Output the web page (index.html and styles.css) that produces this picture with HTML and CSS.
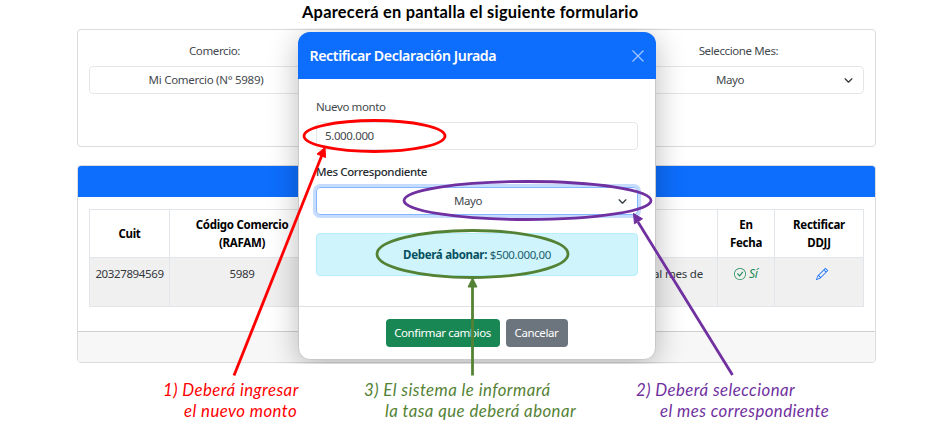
FILE: index.html
```html
<!DOCTYPE html>
<html lang="es">
<head>
<meta charset="utf-8">
<title>Rectificar Declaración Jurada</title>
<link rel="stylesheet" href="styles.css">
</head>
<body>
<h1 class="title">Aparecerá en pantalla el siguiente formulario</h1>
<main class="screen">
  <section class="card filters">
    <div class="filter">
      <label class="filter-label">Comercio:</label>
      <div class="control"><span class="commerce">Mi Comercio (N° 5989)</span></div>
    </div>
    <div class="filter"></div>
    <div class="filter">
      <label class="filter-label month-label">Seleccione Mes:</label>
      <div class="control"><span>Mayo</span>
        <svg class="chevron" viewBox="0 0 16 16"><path d="m2 5 6 6 6-6"/></svg>
      </div>
    </div>
  </section>
  <section class="card results">
    <div class="results-head"></div>
    <div class="results-body">
      <table class="table">
        <colgroup><col class="c-cuit"><col class="c-code"><col><col class="c-date"><col class="c-edit"></colgroup>
        <thead><tr><th>Cuit</th><th><span class="code-head">Código Comercio</span><br>(RAFAM)</th><th></th><th>En<br>Fecha</th><th>Rectificar<br>DDJJ</th></tr></thead>
        <tbody><tr><td>20327894569</td><td>5989</td><td class="detail">al mes de</td>
          <td class="ok"><svg class="icon" viewBox="0 0 16 16"><path d="M8 15A7 7 0 1 1 8 1a7 7 0 0 1 0 14m0 1A8 8 0 1 0 8 0a8 8 0 0 0 0 16"/><path d="m10.97 4.97-.02.022-3.473 4.425-2.093-2.094a.75.75 0 0 0-1.06 1.06L6.97 11.03a.75.75 0 0 0 1.079-.02l3.992-4.99a.75.75 0 0 0-1.071-1.05"/></svg> <i>Sí</i></td>
          <td class="edit"><svg class="icon" viewBox="0 0 16 16"><path d="M12.146.146a.5.5 0 0 1 .708 0l3 3a.5.5 0 0 1 0 .708l-10 10a.5.5 0 0 1-.168.11l-5 2a.5.5 0 0 1-.65-.65l2-5a.5.5 0 0 1 .11-.168zM11.207 2.5 13.5 4.793 14.793 3.5 12.5 1.207zm1.586 3L10.5 3.207 4 9.707V10h.5a.5.5 0 0 1 .5.5v.5h.5a.5.5 0 0 1 .5.5v.5h.293zm-9.761 5.175-.106.106-1.528 3.821 3.821-1.528.106-.106A.5.5 0 0 1 5 12.5V12h-.5a.5.5 0 0 1-.5-.5V11h-.5a.5.5 0 0 1-.468-.325"/></svg></td></tr></tbody>
      </table>
    </div>
    <div class="results-foot"></div>
  </section>
  <div class="modal">
    <header class="modal-head"><h2>Rectificar Declaración Jurada</h2>
      <svg class="close" viewBox="0 0 12 12"><path d="M.5.5l11 11M11.500.5l-11 11"/></svg>
    </header>
    <div class="modal-body">
      <label class="field-label">Nuevo monto</label>
      <div class="input">5.000.000</div>
      <label class="field-label strong">Mes Correspondiente</label>
      <div class="input select"><span>Mayo</span>
        <svg class="chevron" viewBox="0 0 16 16"><path d="m2 5 6 6 6-6"/></svg>
      </div>
      <div class="alert"><b>Deberá abonar:</b> <span>$500.000,00</span></div>
    </div>
    <footer class="modal-foot"><button class="btn confirm">Confirmar cambios</button><button class="btn cancel">Cancelar</button></footer>
  </div>
</main>
<div class="notes">
  <p class="note red">1) Deberá ingresar<br><span class="second">el nuevo monto</span></p>
  <p class="note green">3) El sistema le informará<br><span class="second">la tasa que deberá abonar</span></p>
  <p class="note purple">2) Deberá seleccionar<br><span class="second">el mes correspondiente</span></p>
</div>
<svg class="marks" viewBox="0 0 948 430">
  <g class="m-red"><ellipse cx="374.500" cy="136" rx="70.500" ry="15.500"/><path d="M234 375.500 322 155"/><path class="tip" d="M325 147.500 325.500 157.500 317 154z"/></g>
  <g class="m-purple"><ellipse cx="527.500" cy="200.500" rx="123.500" ry="19"/><path d="M732.500 375 638 222"/><path class="tip" d="M633.500 213.500 642.500 218.800 634.500 223.800z"/></g>
  <g class="m-green"><ellipse cx="472.500" cy="254" rx="95.500" ry="23.500"/><path d="M472.500 375.500V285"/><path class="tip" d="M472.500 278 477 287h-9z"/></g>
</svg>
</body>
</html>
```
FILE: styles.css
```css
* { box-sizing: border-box; }
body {
  margin: 0;
  width: 948px;
  height: 430px;
  overflow: hidden;
  position: relative;
  background: #fff;
  color: #44494e;
  font: 11.5px/18px "Noto Sans", sans-serif;
  letter-spacing: -.38px;
}
h1, h2, p { margin: 0; }
.title {
  height: 28px;
  padding: 1px 0 0 302px;
  color: #000;
  font: bold 16.4px/22px Lato, sans-serif;
  letter-spacing: .25px;
  white-space: nowrap;
}
.screen {
  position: relative;
  width: 799px;
  height: 336px;
  margin-left: 77px;
  padding: 1px 0 0;
  overflow: hidden;
}
.card { border: 1px solid #dcdcdc; border-radius: 4px; }
.filters {
  display: grid;
  grid-template-columns: 251px 1fr 251px;
  gap: 12px;
  height: 118px;
  padding: 12px 11px;
}
.filter { text-align: center; }
.filter-label { display: block; height: 24px; line-height: 18px; }
.control {
  display: flex;
  align-items: center;
  justify-content: center;
  position: relative;
  height: 28px;
  padding-right: 17px;
  border: 1px solid #e4e6e8;
  border-radius: 4px;
}
.commerce { letter-spacing: -.28px; }
.chevron {
  position: absolute;
  right: 10px;
  width: 9px;
  height: 9px;
  fill: none;
  stroke: #343a40;
  stroke-width: 2.3;
  stroke-linecap: round;
  stroke-linejoin: round;
}
.results { height: 198px; margin-top: 18px; overflow: hidden; }
.results-head { height: 31px; background: #0d6efd; }
.results-body { height: 134px; padding: 12px 11px; }
.results-foot { height: 31px; border-top: 1px solid #cfcfcf; background: #f7f7f7; }
.table { width: 775px; border-collapse: collapse; table-layout: fixed; text-align: center; }
.c-cuit { width: 80px; }
.c-code { width: 145px; }
.c-date { width: 57px; }
.c-edit { width: 89px; }
th, td { padding: 0; border: 1px solid #e2e5e9; }
th { height: 48px; padding-top: 1px; color: #000; font-weight: 700; letter-spacing: -.28px; }
td { height: 49px; padding-top: 7px; vertical-align: top; background: #f0f0f0; color: #33373b; }
.detail { padding-right: 14px; text-align: right; letter-spacing: -.2px; }
.icon { width: 12px; height: 12px; vertical-align: -2px; fill: currentColor; }
.ok { color: #198754; }
.ok i { font-size: 12px; }
.edit { padding-left: 5px; color: #0d6efd; }
.modal {
  position: absolute;
  left: 221px;
  top: 4px;
  width: 358px;
  height: 328px;
  border: 1px solid #c9c9c9;
  border-radius: 12px;
  overflow: visible;
  background: #fff;
  box-shadow: 0 6px 30px rgba(0, 0, 0, .27);
}
.modal-head {
  display: flex;
  align-items: center;
  justify-content: space-between;
  height: 47px;
  margin: -1px -1px 0;
  padding: 0 12px 0 11.500px;
  border-radius: 12px 12px 0 0;
  background: #0d6efd;
  color: #fff;
}
.modal-head h2 { padding-top: 1px; font-size: 14.2px; font-weight: 600; line-height: 20px; letter-spacing: -.41px; }
.close { width: 12px; height: 12px; fill: none; stroke: #a6caff; stroke-width: 1.1; }
.modal-body { height: 227px; padding: 19px 17px 0; }
.field-label { display: block; height: 24px; line-height: 18px; }
.field-label.strong { margin-top: 13px; font-weight: 500; color: #272b2f; }
.input {
  display: flex;
  align-items: center;
  position: relative;
  height: 28px;
  padding-left: 8px;
  border: 1px solid #e4e6e8;
  border-radius: 4px;
}
.select {
  justify-content: center;
  padding: 0 18px 0 0;
  border-color: #86b7fe;
  box-shadow: 0 0 0 3px #c5dcff;
}
.alert {
  height: 43px;
  margin-top: 18px;
  border: 1px solid #b6effb;
  border-radius: 4px;
  background: #cff4fc;
  color: #1b606e;
  line-height: 42px;
  text-align: center;
}
.alert b { color: #055160; letter-spacing: -.3px; }
.modal-foot {
  display: flex;
  justify-content: center;
  gap: 6px;
  height: 54px;
  padding-top: 12px;
  border-top: 1px solid #dee2e6;
}
.btn {
  height: 28px;
  padding: 0 1px 0 0;
  border: 0;
  border-radius: 4px;
  color: #fff;
  font: inherit;
  letter-spacing: inherit;
}
.confirm { width: 114px; background: #198754; }
.cancel { width: 62px; background: #6c757d; }
.notes { display: grid; grid-template-columns: 201px 272px 1fr; padding: 15px 0 0 163px; }
.note { font: italic 16.800px/21px Lato, sans-serif; letter-spacing: .44px; white-space: nowrap; }
.second { margin-left: 21px; }
.purple .second { margin-left: 24px; }
.red { color: #f00; }
.green { color: #548235; }
.purple { color: #7030a0; }
.marks { position: absolute; left: 0; top: 0; width: 948px; height: 430px; fill: none; stroke-width: 2.800; pointer-events: none; }
.marks .tip { stroke-width: 1; }
.m-red { stroke: #f00; }
.m-red .tip { fill: #f00; }
.m-purple { stroke: #7030a0; }
.m-purple .tip { fill: #7030a0; }
.m-green { stroke: #548235; }
.m-green .tip { fill: #548235; }
```
